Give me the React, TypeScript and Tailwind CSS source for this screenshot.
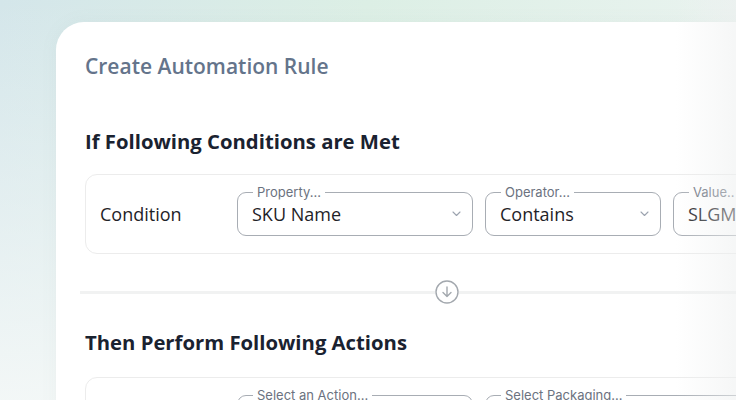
import React from "react";

const OPEN = { fontFamily: '"Open Sans", "Liberation Sans", sans-serif' };
const INTER = { fontFamily: 'Inter, "Liberation Sans", sans-serif' };

function Chevron() {
  return (
    <svg width="9" height="6" viewBox="0 0 9 6" className="shrink-0">
      <polyline points="1,1 4.5,4.5 8,1" fill="none" stroke="#9ca3af" strokeWidth="1.1" strokeLinecap="round" strokeLinejoin="round" />
    </svg>
  );
}

function Select({ label, value, width, chevron = true }: { label: string; value: string; width: string; chevron?: boolean }) {
  return (
    <div className={`relative flex h-[44px] shrink-0 items-center rounded-[9px] border border-[#a8adb4] pl-[14px] pr-[11px] ${width}`}>
      <span
        className="absolute left-[15px] top-[-10px] whitespace-nowrap bg-white px-[4px] text-[13px] leading-[18px] text-[#6b7280]"
        style={INTER}
      >
        {label}
      </span>
      <span className="flex-1 whitespace-nowrap text-[18px] text-[#1f2328]" style={OPEN}>
        {value}
      </span>
      {chevron && <Chevron />}
    </div>
  );
}

export default function App() {
  return (
    <div className="relative h-[400px] w-[736px] overflow-hidden bg-[linear-gradient(to_bottom,rgba(255,255,255,0)_0%,rgba(246,249,248,0.9)_100%),linear-gradient(to_right,#d4e6ea_0%,#dcefe5_50%,#e9f3ef_100%)]">
      <div className="ml-[56px] mt-[22px] w-[780px] rounded-[28px] bg-white pl-[29px] pt-[30px] shadow-[0_0_18px_rgba(120,140,140,0.06)]">
        <h1 className="text-[21px] font-semibold leading-[29px] text-[#64748b]" style={OPEN}>
          Create Automation Rule
        </h1>
        <h2 className="mt-[46px] text-[20.3px] font-bold leading-[28px] text-[#1a2230]" style={OPEN}>
          If Following Conditions are Met
        </h2>
        <div className="mt-[19px] flex h-[80px] items-center rounded-[12px] border border-[#ececec] pl-[14px]">
          <span className="w-[137px] shrink-0 text-[18px] text-[#1f2328]" style={OPEN}>
            Condition
          </span>
          <div className="flex gap-[12px]">
            <Select label="Property..." value="SKU Name" width="w-[236px]" />
            <Select label="Operator..." value="Contains" width="w-[176px]" />
            <Select label="Value.." value="SLGM" width="w-[200px]" chevron={false} />
          </div>
        </div>
        <div className="ml-[-5px] mt-[26px] flex h-[24px] items-center">
          <div className="h-[3px] w-[355px] bg-[#f1f2f2]" />
          <svg width="24" height="24" viewBox="0 0 24 24" className="shrink-0">
            <circle cx="12" cy="12" r="11" fill="none" stroke="#a3a8ae" strokeWidth="1.4" />
            <path d="M12 7v9.5M8 12.5l4 4 4-4" fill="none" stroke="#a3a8ae" strokeWidth="1.4" strokeLinecap="round" strokeLinejoin="round" />
          </svg>
          <div className="h-[3px] flex-1 bg-[#f1f2f2]" />
        </div>
        <h2 className="mt-[24px] text-[20.3px] font-bold leading-[28px] text-[#1a2230]" style={OPEN}>
          Then Perform Following Actions
        </h2>
        <div className="mt-[21px] flex h-[80px] items-center rounded-[12px] border border-[#ececec] pl-[14px]">
          <span className="w-[137px] shrink-0 text-[18px] text-[#1f2328]" style={OPEN}>
            Action
          </span>
          <div className="flex gap-[12px]">
            <Select label="Select an Action..." value="" width="w-[236px]" />
            <Select label="Select Packaging..." value="" width="w-[300px]" />
          </div>
        </div>
      </div>
      <div className="pointer-events-none absolute right-0 top-0 h-full w-[60px] bg-[linear-gradient(to_right,rgba(240,242,242,0),rgba(238,240,240,0.55))]" />
    </div>
  );
}
